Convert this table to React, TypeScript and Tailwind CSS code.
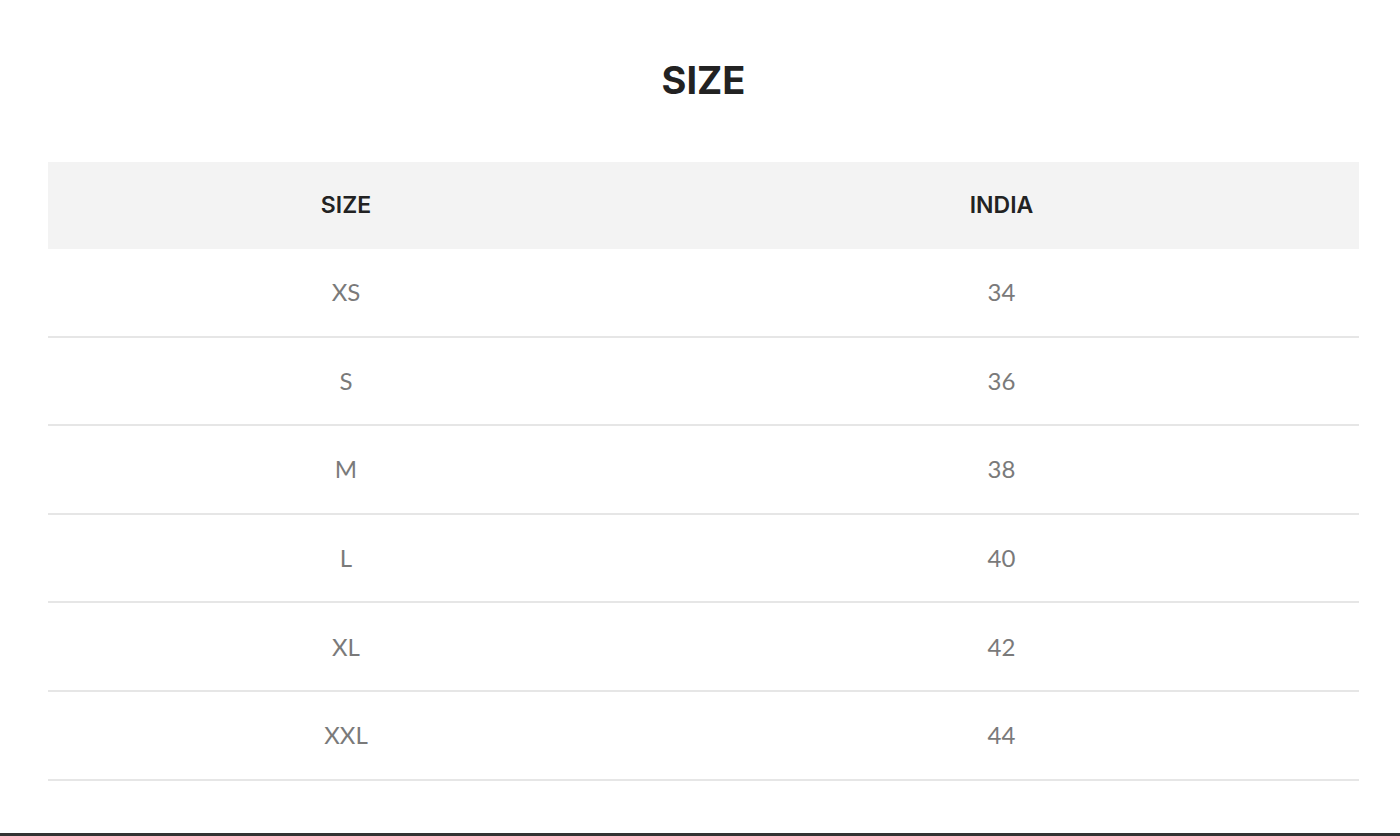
import React from 'react';

const rows = [
  { size: 'XS', india: '34' },
  { size: 'S', india: '36' },
  { size: 'M', india: '38' },
  { size: 'L', india: '40' },
  { size: 'XL', india: '42' },
  { size: 'XXL', india: '44' },
];

const App: React.FC = () => {
  return (
    <div className="w-[1400px] h-[836px] bg-white overflow-hidden flex flex-col">
      {/* Title */}
      <div className="ml-[48px] w-[1311px] pt-[56px] pb-[58px] text-center">
        <h1 className="font-['Inter',sans-serif] text-[38px] leading-[48px] font-bold text-[#222]">
          SIZE
        </h1>
      </div>

      {/* Size chart */}
      <div className="ml-[48px] w-[1311px]">
        <div className="flex h-[87px] bg-[#f3f3f3] items-center font-['Inter',sans-serif] text-[23px] font-semibold text-[#222]">
          <div className="w-[596px] text-center">SIZE</div>
          <div className="flex-1 text-center">INDIA</div>
        </div>
        {rows.map((r) => (
          <div
            key={r.size}
            className="flex h-[88.6px] items-center border-b-2 border-[#e6e6e6] font-['Lato',sans-serif] text-[24px] text-[#7a7a7a]"
          >
            <div className="w-[596px] text-center">{r.size}</div>
            <div className="flex-1 text-center">{r.india}</div>
          </div>
        ))}
      </div>

      <div className="mt-auto h-[3px] bg-[#333]" />
    </div>
  );
};

export default App;
